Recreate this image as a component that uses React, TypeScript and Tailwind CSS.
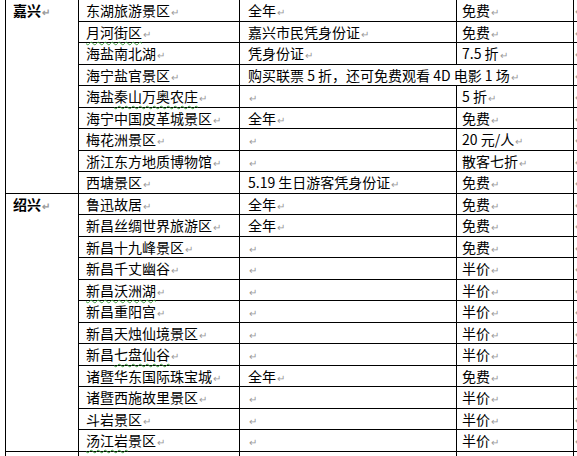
import React from "react";

type Row = {
  name: string;
  wavy?: [string, string, string];
  cond?: string;
  price?: string;
  merged?: string;
};

type Section = { city: string; rows: Row[] };

const sections: Section[] = [
  {
    city: "嘉兴",
    rows: [
      { name: "东湖旅游景区", cond: "全年", price: "免费" },
      { name: "", wavy: ["", "月河街区", ""], cond: "嘉兴市民凭身份证", price: "免费" },
      { name: "海盐南北湖", cond: "凭身份证", price: "7.5 折" },
      { name: "海宁盐官景区", merged: "购买联票 5 折，还可免费观看 4D 电影 1 场" },
      { name: "", wavy: ["海盐", "秦山万奥农庄", ""], price: "5 折" },
      { name: "海宁中国皮革城景区", cond: "全年", price: "免费" },
      { name: "梅花洲景区", price: "20 元/人" },
      { name: "浙江东方地质博物馆", price: "散客七折" },
      { name: "西塘景区", cond: "5.19 生日游客凭身份证", price: "免费" },
    ],
  },
  {
    city: "绍兴",
    rows: [
      { name: "鲁迅故居", cond: "全年", price: "免费" },
      { name: "新昌丝绸世界旅游区", cond: "全年", price: "免费" },
      { name: "新昌十九峰景区", price: "免费" },
      { name: "新昌千丈幽谷", price: "半价" },
      { name: "", wavy: ["", "新昌沃洲湖", ""], price: "半价" },
      { name: "新昌重阳宫", price: "半价" },
      { name: "新昌天烛仙境景区", price: "半价" },
      { name: "", wavy: ["新昌", "七盘仙谷", ""], price: "半价" },
      { name: "诸暨华东国际珠宝城", cond: "全年", price: "免费" },
      { name: "诸暨西施故里景区", price: "半价" },
      { name: "斗岩景区", price: "半价" },
      { name: "", wavy: ["", "汤江岩", "景区"], price: "半价" },
    ],
  },
  {
    city: "湖州",
    rows: [{ name: "湖州太湖旅游度假区", cond: "凭身份证可享受门票优惠价格", price: "半价" }],
  },
];

const Mark = () => <span className="ml-[1px] text-[10px] text-[#9a9a9a]">↵</span>;

function Name({ row }: { row: Row }) {
  if (row.wavy) {
    const [a, b, c] = row.wavy;
    return (
      <>
        {a}
        <span className="underline decoration-wavy decoration-[#3fa03f] decoration-1 underline-offset-[3px]">{b}</span>
        {c}
      </>
    );
  }
  return <>{row.name}</>;
}

export default function App() {
  let idx = 0;
  return (
    <div className="h-[456px] w-[577px] overflow-hidden bg-white font-['Noto_Sans_CJK_SC','Liberation_Sans',sans-serif] text-[14px] leading-[21px] text-black">
      <div className="ml-[5px] flex w-[572px] flex-col border-l border-black">
        {sections.map((s) => (
          <div key={s.city} className="flex">
            <div className="w-[73px] shrink-0 border-r border-b border-black pl-[7px] font-bold whitespace-nowrap">
              {s.city}
              <Mark />
            </div>
            <div className="flex flex-col">
              {s.rows.map((r) => {
                const h = idx++ % 2 ? "h-[21px]" : "h-[22px]";
                return (
                  <div key={idx} className={`flex ${h} border-b border-black whitespace-nowrap`}>
                    <div className="w-[161px] shrink-0 border-r border-black pl-[7px]">
                      <Name row={r} />
                      <Mark />
                    </div>
                    {r.merged ? (
                      <div className="w-[334px] shrink-0 border-r border-black pl-[8px]">
                        {r.merged}
                        <Mark />
                      </div>
                    ) : (
                      <>
                        <div className="w-[217px] shrink-0 border-r border-black pl-[8px]">
                          {r.cond}
                          <Mark />
                        </div>
                        <div className="w-[117px] shrink-0 border-r border-black pl-[5px]">
                          {r.price}
                          <Mark />
                        </div>
                      </>
                    )}
                    <span className="shrink-0 pl-[1px] text-[10px] text-[#9a9a9a]">↵</span>
                  </div>
                );
              })}
            </div>
          </div>
        ))}
      </div>
    </div>
  );
}
